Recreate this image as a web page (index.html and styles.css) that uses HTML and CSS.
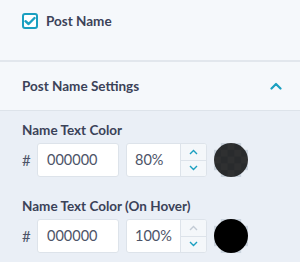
FILE: index.html
```html
<!DOCTYPE html>
<html lang="en">
<head>
    <meta charset="UTF-8">
    <title>Post Name Settings</title>
    <link rel="stylesheet" href="styles.css">
</head>
<body>

    <div class="opcion">
        <label class="check">
            <span class="check-caja">
                <svg width="12" height="10" viewBox="0 0 12 10"><path d="M1.5 5.2 L4.6 8 L10.5 2" fill="none" stroke="#1a9fc0" stroke-width="2.4" stroke-linecap="round" stroke-linejoin="round"/></svg>
            </span>
            Post Name
        </label>
    </div>

    <div class="panel">
        <div class="panel-cabecera">
            <span>Post Name Settings</span>
            <svg width="12" height="8" viewBox="0 0 12 8"><path d="M1.5 6.5 L6 2 L10.5 6.5" fill="none" stroke="#1a9fc0" stroke-width="2.2" stroke-linecap="round" stroke-linejoin="round"/></svg>
        </div>

        <div class="panel-cuerpo">
            <div class="campo">
                <div class="campo-titulo">Name Text Color</div>
                <div class="fila">
                    <span class="hash">#</span>
                    <div class="caja-texto">000000</div>
                    <div class="caja-numero">
                        <span class="valor">80%</span>
                        <div class="flechas">
                            <span class="flecha"><svg width="9" height="6" viewBox="0 0 9 6"><path d="M1 5 L4.5 1.5 L8 5" fill="none" stroke="#1a9fc0" stroke-width="1.4"/></svg></span>
                            <span class="flecha"><svg width="9" height="6" viewBox="0 0 9 6"><path d="M1 1 L4.5 4.5 L8 1" fill="none" stroke="#1a9fc0" stroke-width="1.4"/></svg></span>
                        </div>
                    </div>
                    <div class="muestra"><span class="circulo" style="background: rgba(0,0,0,0.8)"></span></div>
                </div>
            </div>

            <div class="campo">
                <div class="campo-titulo">Name Text Color (On Hover)</div>
                <div class="fila">
                    <span class="hash">#</span>
                    <div class="caja-texto">000000</div>
                    <div class="caja-numero">
                        <span class="valor">100%</span>
                        <div class="flechas">
                            <span class="flecha"><svg width="9" height="6" viewBox="0 0 9 6"><path d="M1 5 L4.5 1.5 L8 5" fill="none" stroke="#c3cbd5" stroke-width="1.4"/></svg></span>
                            <span class="flecha"><svg width="9" height="6" viewBox="0 0 9 6"><path d="M1 1 L4.5 4.5 L8 1" fill="none" stroke="#1a9fc0" stroke-width="1.4"/></svg></span>
                        </div>
                    </div>
                    <div class="muestra"><span class="circulo" style="background: #000"></span></div>
                </div>
            </div>
        </div>
    </div>

</body>
</html>
```

FILE: styles.css
```css
:root {
    --fondo-claro: #f5f8fb;
    --fondo-panel: #eaeff6;
    --texto: #3b4258;
    --texto-input: #4d5468;
    --turquesa: #1a9fc0;
    --borde: #dde3ea;
}

body {
    margin: 0;
    width: 300px;
    font-family: 'Lato', sans-serif;
    color: var(--texto);
    background: var(--fondo-panel);
}

.opcion {
    height: 62px;
    padding: 0 22px 18px;
    display: flex;
    align-items: center;
    background: var(--fondo-claro);
    border-bottom: 2px solid #e2e7ed;
    box-sizing: border-box;
}

.check {
    display: flex;
    align-items: center;
    gap: 8px;
    font-size: 13.5px;
    font-weight: 700;
}

.check-caja {
    width: 16px;
    height: 16px;
    border: 2px solid var(--turquesa);
    border-radius: 3px;
    box-sizing: border-box;
    background: #fff;
    display: flex;
    align-items: center;
    justify-content: center;
}

.panel-cabecera {
    height: 48px;
    padding: 0 18px 0 22px;
    display: flex;
    align-items: center;
    justify-content: space-between;
    background: var(--fondo-claro);
    border-bottom: 1px solid var(--borde);
    font-size: 13.5px;
    font-weight: 700;
}

.panel-cuerpo {
    padding: 11px 22px 0;
}

.campo + .campo {
    margin-top: 21px;
}

.campo-titulo {
    font-size: 13.5px;
    font-weight: 700;
    line-height: 16px;
    margin-bottom: 5px;
}

.fila {
    display: flex;
    align-items: center;
}

.hash {
    width: 15px;
    font-size: 15px;
    color: var(--texto-input);
}

.caja-texto,
.caja-numero {
    height: 34px;
    background: #fff;
    border: 1px solid var(--borde);
    border-radius: 3px;
    box-sizing: border-box;
    font-size: 14.5px;
    color: var(--texto-input);
}

.caja-texto {
    width: 82px;
    padding-left: 9px;
    line-height: 32px;
}

.caja-numero {
    width: 81px;
    margin-left: 7px;
    display: flex;
    overflow: hidden;
}

.valor {
    flex: 1;
    padding-left: 8px;
    line-height: 32px;
}

.flechas {
    width: 25px;
    display: flex;
    flex-direction: column;
    background: #f4f7fa;
    border-left: 1px solid var(--borde);
}

.flecha {
    flex: 1;
    display: flex;
    align-items: center;
    justify-content: center;
}

.flecha + .flecha {
    border-top: 1px solid var(--borde);
}

/* cuadro de transparencia detras del circulo */
.muestra {
    width: 34px;
    height: 34px;
    margin-left: 7px;
    position: relative;
    background-color: var(--fondo-panel);
    background-image: conic-gradient(#cbd4de 25%, transparent 0 50%, #cbd4de 0 75%, transparent 0);
    background-size: 13.6px 13.6px;
}

.circulo {
    position: absolute;
    inset: 0;
    border-radius: 50%;
}
```
